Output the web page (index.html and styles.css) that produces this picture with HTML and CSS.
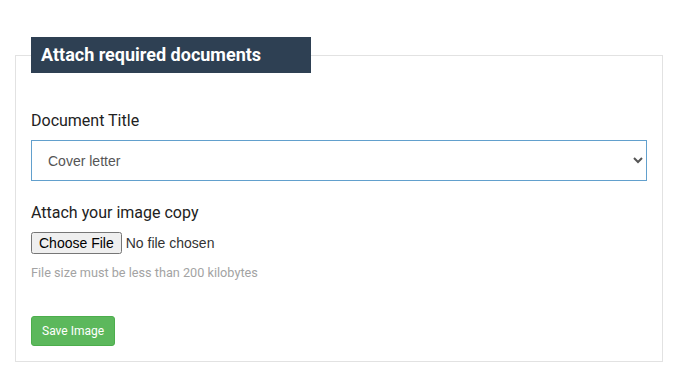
FILE: index.html
```html
<!DOCTYPE html>
<html lang="en">
<head>
    <meta charset="UTF-8">
    <meta name="viewport" content="width=device-width, initial-scale=1.0">
    <title>Attach Documents</title>
    <link rel="stylesheet" href="styles.css">
</head>
<body>
    <form class="upload-form">
        <fieldset class="doc-box">
            <legend>Attach required documents</legend>

            <div class="form-group">
                <label for="docTitle">Document Title</label>
                <select id="docTitle" class="form-control">
                    <option>Cover letter</option>
                    <option>Curriculum vitae</option>
                    <option>Certificate</option>
                </select>
            </div>

            <div class="form-group">
                <label for="docFile">Attach your image copy</label>
                <input type="file" id="docFile" class="file-input">
                <p class="help-text">File size must be less than 200 kilobytes</p>
            </div>

            <button type="submit" class="save-btn">Save Image</button>
        </fieldset>
    </form>
</body>
</html>
```

FILE: styles.css
```css
* {
    box-sizing: border-box;
}

body {
    margin: 0;
    background: #fff;
    font-family: 'Roboto', 'Liberation Sans', sans-serif;
    color: #222;
}

.upload-form {
    padding: 37px 18px 0 15px;
}

.doc-box {
    margin: 0;
    padding: 37px 15px 15px;
    border: 1px solid #e2e2e2;
    min-width: 0;
}

.doc-box legend {
    width: 280px;
    padding: 5px 10px;
    background: #2e4053;
    color: #fff;
    font-size: 18px;
    font-weight: 700;
    line-height: 26px;
}

.form-group {
    margin-bottom: 21px;
}

label {
    display: block;
    font-size: 16px;
    line-height: 22px;
    margin-bottom: 8px;
}

.form-control {
    display: block;
    width: 100%;
    height: 41px;
    padding: 0 8px 0 12px;
    border: 1px solid #62a0cd;
    border-radius: 0;
    background: #fff;
    color: #555;
    font-family: 'Liberation Sans', Arial, sans-serif;
    font-size: 14px;
}

.form-control:focus {
    outline: none;
}

.file-input {
    display: block;
    font-family: 'Liberation Sans', Arial, sans-serif;
    font-size: 14px;
    color: #333;
}

.help-text {
    margin: 10px 0 0;
    font-size: 12.7px;
    line-height: 18px;
    color: #a3a3a3;
}

.save-btn {
    height: 30px;
    margin-top: 13px;
    padding: 5px 10px;
    background: #5cb85c;
    border: 1px solid #4cae4c;
    border-radius: 3px;
    color: #fff;
    font-family: 'Roboto', 'Liberation Sans', sans-serif;
    font-size: 12px;
    line-height: 18px;
    cursor: pointer;
}
```
